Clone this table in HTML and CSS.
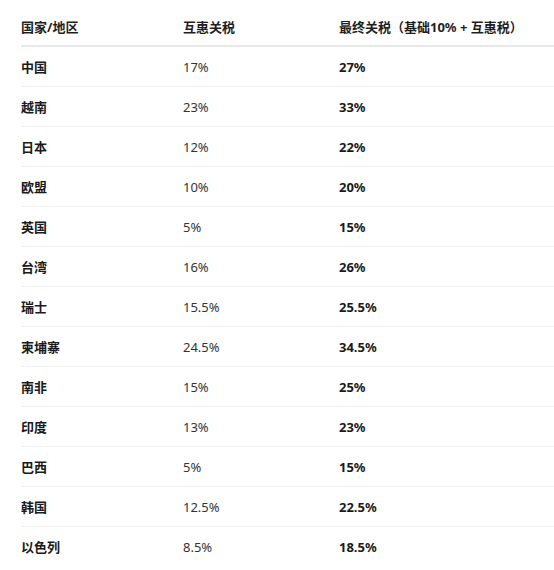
FILE: index.html
```html
<!DOCTYPE html>
<html lang="zh">
<head>
<meta charset="utf-8">
<link rel="stylesheet" href="styles.css">
</head>
<body>
<table class="tariffs">
  <thead>
    <tr><th>国家/地区</th><th>互惠关税</th><th>最终关税（基础10% + 互惠税）</th></tr>
  </thead>
  <tbody>
    <tr><td class="name">中国</td><td>17%</td><td class="final">27%</td></tr>
    <tr><td class="name">越南</td><td>23%</td><td class="final">33%</td></tr>
    <tr><td class="name">日本</td><td>12%</td><td class="final">22%</td></tr>
    <tr><td class="name">欧盟</td><td>10%</td><td class="final">20%</td></tr>
    <tr><td class="name">英国</td><td>5%</td><td class="final">15%</td></tr>
    <tr><td class="name">台湾</td><td>16%</td><td class="final">26%</td></tr>
    <tr><td class="name">瑞士</td><td>15.5%</td><td class="final">25.5%</td></tr>
    <tr><td class="name">柬埔寨</td><td>24.5%</td><td class="final">34.5%</td></tr>
    <tr><td class="name">南非</td><td>15%</td><td class="final">25%</td></tr>
    <tr><td class="name">印度</td><td>13%</td><td class="final">23%</td></tr>
    <tr><td class="name">巴西</td><td>5%</td><td class="final">15%</td></tr>
    <tr><td class="name">韩国</td><td>12.5%</td><td class="final">22.5%</td></tr>
    <tr><td class="name">以色列</td><td>8.5%</td><td class="final">18.5%</td></tr>
  </tbody>
</table>
</body>
</html>
```
FILE: styles.css
```css
html, body {
  margin: 0;
  padding: 0;
  background: #ffffff;
  overflow: hidden;
}
body {
  font-family: "Noto Sans", "Noto Sans CJK SC", sans-serif;
  font-size: 13px;
  color: #333333;
  padding-left: 21px;
}
.tariffs {
  border-collapse: collapse;
  width: 540px;
  table-layout: fixed;
}
.tariffs th:nth-child(1) { width: 162px; }
.tariffs th:nth-child(2) { width: 156px; }
.tariffs th {
  text-align: left;
  font-weight: 700;
  color: #1f1f1f;
  line-height: 20px;
  padding: 17px 0 8px 0;
  border-bottom: 2px solid #e8e8e8;
  white-space: nowrap;
}
.tariffs td {
  line-height: 20px;
  padding: 10px 0 9px 0;
  border-bottom: 1px solid #f0f0f0;
  white-space: nowrap;
}
.tariffs tbody tr:last-child td {
  border-bottom: none;
}
.tariffs .name,
.tariffs .final {
  font-weight: 700;
  color: #1a1a1a;
}
```
